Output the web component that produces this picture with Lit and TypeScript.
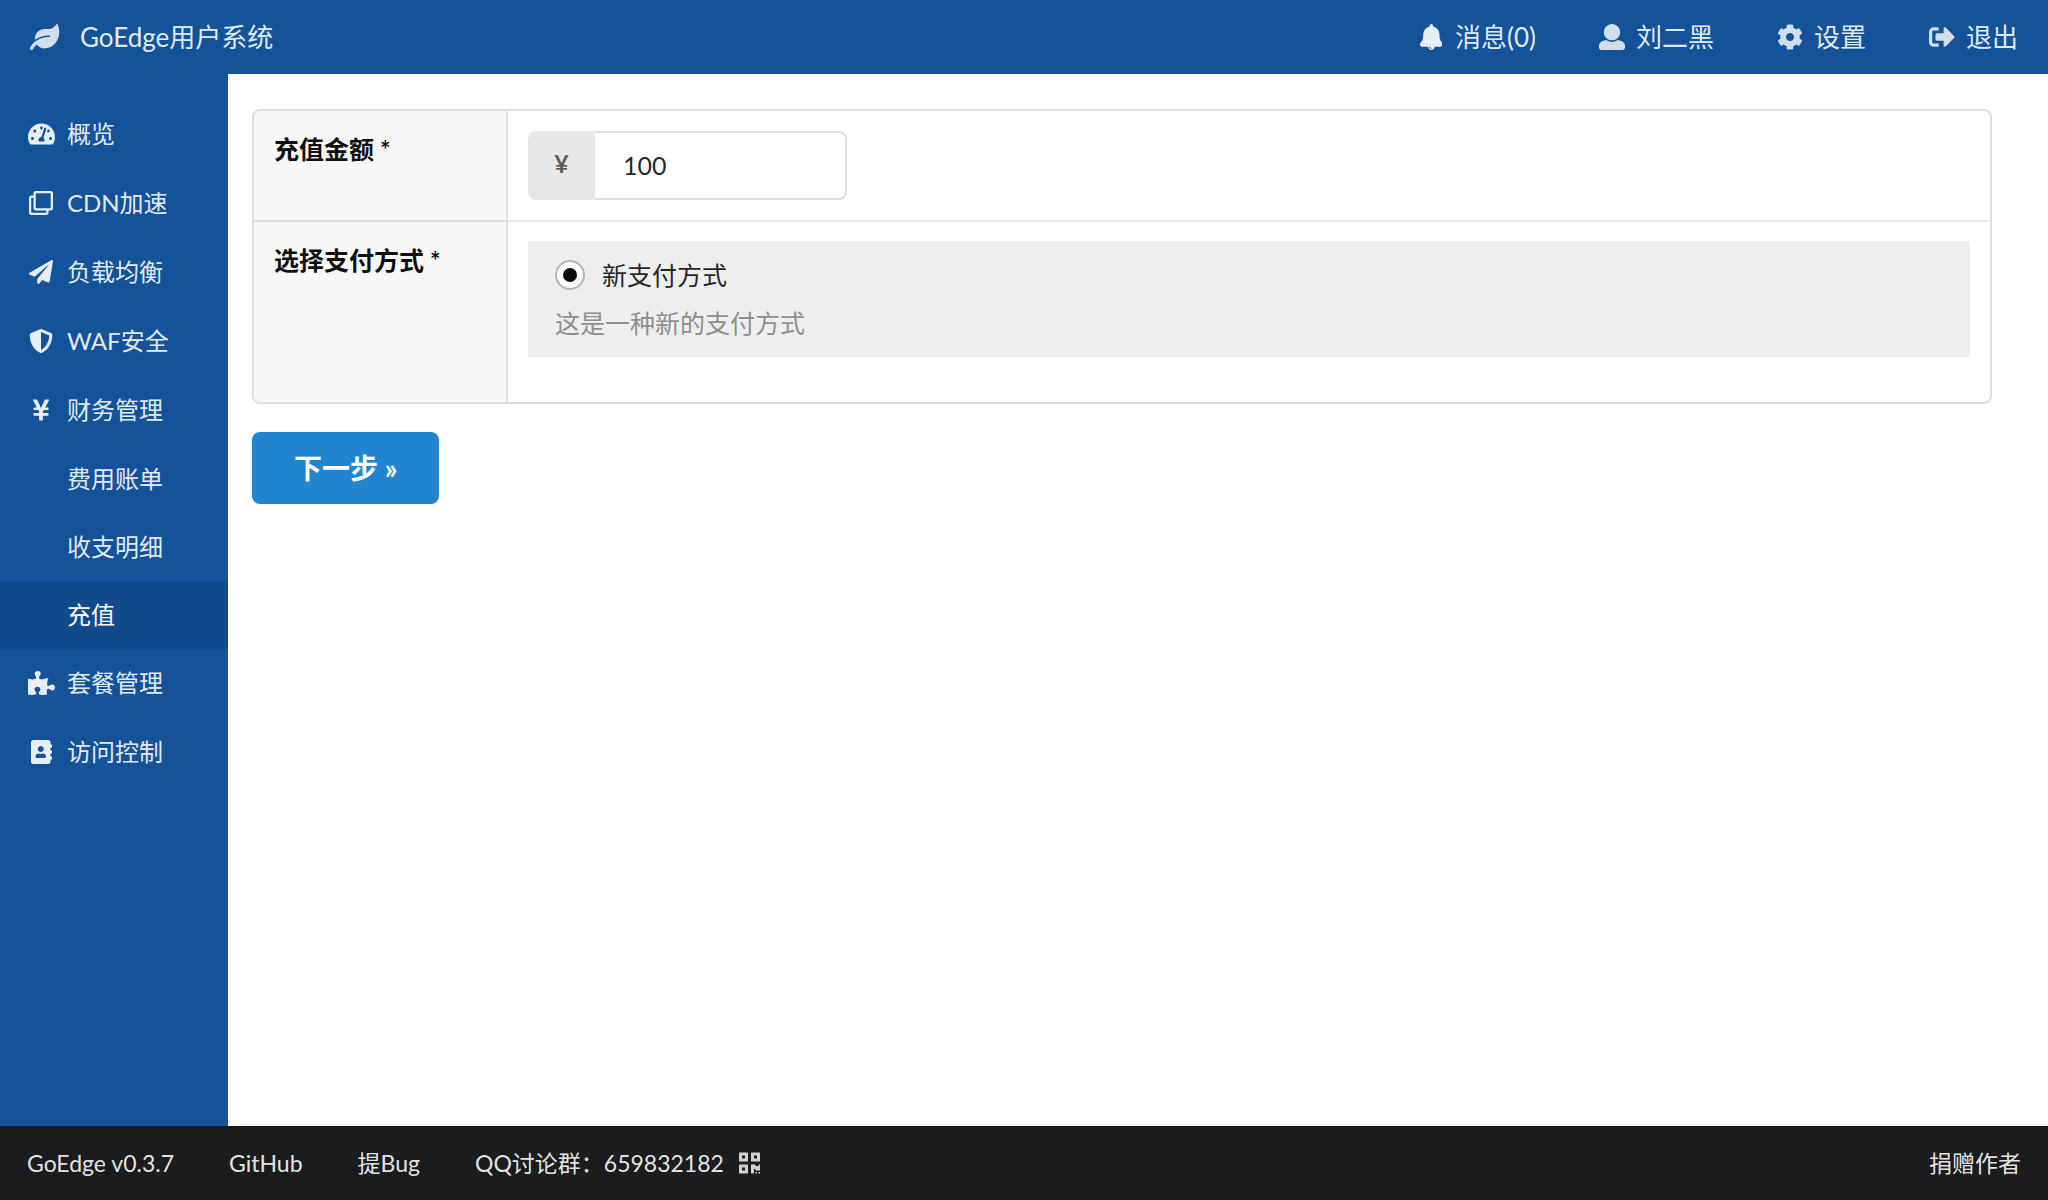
import { LitElement, html, css, svg } from "lit";
import { customElement, property, state } from "lit/decorators.js";
import { classMap } from "lit/directives/class-map.js";

interface Glyph {
  width: number;
  path: string;
}

const GLYPHS: Record<string, Glyph> = {
  leaf: {
    width: 576,
    path: "M546.2 9.7c-5.6-12.5-21.6-13-28.3-1.2C486.9 62.4 431.4 96 368 96h-80C182 96 96 182 96 288c0 7 .8 13.7 1.5 20.5C161.3 262.8 253.4 224 384 224c8.8 0 16 7.2 16 16s-7.2 16-16 16C132.6 256 26 410.1 2.4 468c-6.6 16.3 1.2 34.9 17.5 41.6 16.4 6.8 35-1.1 41.8-17.3 1.5-3.6 20.9-47.9 71.9-90.6 32.4 43.9 94 85.8 174.9 77.2C465.5 467.5 576 326.7 576 154.3c0-50.2-10.8-102.2-29.8-144.6z",
  },
  dashboard: {
    width: 576,
    path: "M288 32C128.94 32 0 160.94 0 320c0 52.8 14.25 102.26 39.06 144.8 5.61 9.62 16.3 15.2 27.44 15.2h443c11.14 0 21.83-5.58 27.44-15.2C561.75 422.26 576 372.8 576 320c0-159.06-128.94-288-288-288zm0 64c14.71 0 26.58 10.13 30.32 23.65-1.11 2.26-2.64 4.23-3.45 6.67l-9.22 27.67c-5.13 3.49-10.97 6.01-17.64 6.01-17.67 0-32-14.33-32-32S270.33 96 288 96zM96 384c-17.67 0-32-14.33-32-32s14.33-32 32-32 32 14.33 32 32-14.33 32-32 32zm48-160c-17.67 0-32-14.33-32-32s14.33-32 32-32 32 14.33 32 32-14.33 32-32 32zm246.77-72.41l-61.33 184C343.13 347.33 352 364.54 352 384c0 11.72-3.38 22.55-8.88 32H232.88c-5.5-9.45-8.88-20.28-8.88-32 0-33.94 26.5-61.43 59.9-63.59l61.34-184.01c4.17-12.56 17.73-19.45 30.36-15.17 12.57 4.19 19.35 17.79 15.17 30.36zm14.66 57.2l15.52-46.55c3.47-1.29 7.13-2.23 11.05-2.23 17.67 0 32 14.33 32 32s-14.33 32-32 32c-11.38-.01-20.89-6.28-26.57-15.22zM480 384c-17.67 0-32-14.33-32-32s14.33-32 32-32 32 14.33 32 32-14.33 32-32 32z",
  },
  clone: {
    width: 512,
    path: "M464 0H144c-26.51 0-48 21.49-48 48v48H48c-26.51 0-48 21.49-48 48v320c0 26.51 21.49 48 48 48h320c26.51 0 48-21.49 48-48v-48h48c26.51 0 48-21.49 48-48V48c0-26.51-21.49-48-48-48zM362 464H54a6 6 0 0 1-6-6V150a6 6 0 0 1 6-6h42v224c0 26.51 21.49 48 48 48h224v42a6 6 0 0 1-6 6zm96-96H150a6 6 0 0 1-6-6V54a6 6 0 0 1 6-6h308a6 6 0 0 1 6 6v308a6 6 0 0 1-6 6z",
  },
  plane: {
    width: 512,
    path: "M476 3.2L12.5 270.6c-18.1 10.4-15.8 35.6 2.2 43.2L121 358.4l287.3-253.2c5.5-4.9 13.3 2.6 8.6 8.3L176 407v80.5c0 23.6 28.5 32.9 42.5 15.8L282 426l124.6 52.2c14.2 6 30.4-2.9 33-18.2l72-432C515 7.8 493.3-6.8 476 3.2z",
  },
  shield: {
    width: 512,
    path: "M466.5 83.7l-192-80a48.15 48.15 0 0 0-36.9 0l-192 80C27.7 91.1 16 108.6 16 128c0 198.5 114.5 335.7 221.5 380.3 11.8 4.9 25.1 4.9 36.9 0C360.1 472.6 496 349.3 496 128c0-19.4-11.7-36.9-29.5-44.3zM256.1 446.3l-.1-381 175.9 73.3c-3.3 151.4-82.1 261.1-175.8 307.7z",
  },
  yen: {
    width: 384,
    path: "M351.2 32h-65.3c-4.6 0-8.8 2.6-10.8 6.7l-55.4 113.2c-14.5 34.7-27.1 71.9-27.1 71.9h-1.3s-12.6-37.2-27.1-71.9L108.8 38.7c-2-4.1-6.2-6.7-10.8-6.7H32.8c-9.1 0-14.8 9.7-10.6 17.6L102.3 200H44c-6.6 0-12 5.4-12 12v32c0 6.6 5.4 12 12 12h88.2l19.8 37.2V320H44c-6.6 0-12 5.4-12 12v32c0 6.6 5.4 12 12 12h108v92c0 6.6 5.4 12 12 12h56c6.6 0 12-5.4 12-12v-92h108c6.6 0 12-5.4 12-12v-32c0-6.6-5.4-12-12-12H232v-26.8l19.8-37.2H340c6.6 0 12-5.4 12-12v-32c0-6.6-5.4-12-12-12h-58.3l80.1-150.4c4.3-7.9-1.5-17.6-10.6-17.6z",
  },
  puzzle: {
    width: 576,
    path: "M519.442 288.651c-41.519 0-59.5 31.593-82.058 31.593C377.409 320.244 432 144 432 144s-196.288 80-196.288-3.297c0-35.827 36.288-46.25 36.288-85.985C272 19.216 243.885 0 210.539 0c-34.654 0-66.366 18.891-66.366 56.346 0 41.364 31.711 59.277 31.711 81.75C175.885 207.719 0 166.758 0 166.758v333.237s178.635 41.047 178.635-28.662c0-22.473-40-40.107-40-81.471 0-37.456 29.25-56.346 63.577-56.346 33.673 0 61.788 19.216 61.788 54.717 0 39.735-36.288 50.158-36.288 85.985 0 60.803 129.675 25.73 181.23 25.73 0 0-34.725-120.101 25.827-120.101 35.962 0 46.423 36.152 86.308 36.152C556.712 416 576 387.99 576 354.443c0-34.199-18.962-65.792-56.558-65.792z",
  },
  address: {
    width: 448,
    path: "M436 160c6.6 0 12-5.4 12-12v-40c0-6.6-5.4-12-12-12h-20V48c0-26.5-21.5-48-48-48H48C21.5 0 0 21.5 0 48v416c0 26.5 21.5 48 48 48h320c26.5 0 48-21.5 48-48v-48h20c6.6 0 12-5.4 12-12v-40c0-6.6-5.4-12-12-12h-20v-64h20c6.6 0 12-5.4 12-12v-40c0-6.6-5.4-12-12-12h-20v-64h20zm-228-32c35.3 0 64 28.7 64 64s-28.7 64-64 64-64-28.7-64-64 28.7-64 64-64zm112 236.8c0 10.6-10 19.2-22.4 19.2H118.4C106 384 96 375.4 96 364.8v-19.2c0-31.8 30.1-57.6 67.2-57.6h5c12.3 5.1 25.7 8 39.8 8s27.6-2.9 39.8-8h5c37.1 0 67.2 25.8 67.2 57.6v19.2z",
  },
  bell: {
    width: 448,
    path: "M433.884 366.059C411.634 343.809 384 316.118 384 208c0-79.394-57.831-145.269-133.663-157.83A31.845 31.845 0 0 0 256 32c0-17.673-14.327-32-32-32s-32 14.327-32 32c0 6.75 2.095 13.008 5.663 18.17C121.831 62.731 64 128.606 64 208c0 108.118-27.643 135.809-49.893 158.059C-16.042 396.208 5.325 448 48.048 448H160c0 35.346 28.654 64 64 64s64-28.654 64-64h111.943c42.638 0 64.151-51.731 33.941-81.941zM224 472a8 8 0 0 1 0 16c-22.056 0-40-17.944-40-40h16c0 13.234 10.766 24 24 24z",
  },
  user: {
    width: 512,
    path: "M256 0c88.366 0 160 71.634 160 160s-71.634 160-160 160S96 248.366 96 160 167.634 0 256 0zm183.283 333.821l-71.313-17.828c-74.923 53.89-165.738 41.864-223.94 0l-71.313 17.828C29.981 344.505 0 382.903 0 426.955V464c0 26.51 21.49 48 48 48h416c26.51 0 48-21.49 48-48v-37.045c0-44.052-29.981-82.45-72.717-93.134z",
  },
  cog: {
    width: 512,
    path: "M444.788 291.1l42.616 24.599c4.867 2.809 7.126 8.618 5.459 13.985-11.07 35.642-29.97 67.842-54.689 94.586a12.016 12.016 0 0 1-14.832 2.254l-42.584-24.595a191.577 191.577 0 0 1-60.759 35.13v49.182a12.01 12.01 0 0 1-9.377 11.718c-34.956 7.85-72.499 8.256-109.219.007-5.49-1.233-9.403-6.096-9.403-11.723v-49.184a191.555 191.555 0 0 1-60.759-35.13l-42.584 24.595a12.016 12.016 0 0 1-14.832-2.254c-24.718-26.744-43.619-58.944-54.689-94.586-1.667-5.366.592-11.175 5.459-13.985L67.212 291.1a193.48 193.48 0 0 1 0-70.199l-42.616-24.599c-4.867-2.809-7.126-8.618-5.459-13.985 11.07-35.642 29.97-67.842 54.689-94.586a12.016 12.016 0 0 1 14.832-2.254l42.584 24.595a191.577 191.577 0 0 1 60.759-35.13V25.759a12.01 12.01 0 0 1 9.377-11.718c34.956-7.85 72.499-8.256 109.219-.007 5.49 1.233 9.403 6.096 9.403 11.723v49.184a191.555 191.555 0 0 1 60.759 35.13l42.584-24.595a12.016 12.016 0 0 1 14.832 2.254c24.718 26.744 43.619 58.944 54.689 94.586 1.667 5.366-.592 11.175-5.459 13.985L444.788 220.9a193.485 193.485 0 0 1 0 70.2zM336 256c0-44.112-35.888-80-80-80s-80 35.888-80 80 35.888 80 80 80 80-35.888 80-80z",
  },
  exit: {
    width: 512,
    path: "M497 273L329 441c-15 15-41 4.5-41-17v-96H152c-13.3 0-24-10.7-24-24v-96c0-13.3 10.7-24 24-24h136V88c0-21.4 25.9-32 41-17l168 168c9.3 9.4 9.3 24.6 0 34zM192 436v-40c0-6.6-5.4-12-12-12H96c-17.7 0-32-14.3-32-32V160c0-17.7 14.3-32 32-32h84c6.6 0 12-5.4 12-12V76c0-6.6-5.4-12-12-12H96c-53 0-96 43-96 96v192c0 53 43 96 96 96h84c6.6 0 12-5.4 12-12z",
  },
  qrcode: {
    width: 448,
    path: "M0 224h192V32H0v192zM64 96h64v64H64V96zm192-64v192h192V32H256zm128 128h-64V96h64v64zM0 480h192V288H0v192zm64-128h64v64H64v-64zm352-64h32v128h-96v-32h-32v96h-64V288h96v32h64v-32zm0 160h32v32h-32v-32zm-64 0h32v32h-32v-32z",
  },
};

@customElement("glyph-icon")
export class GlyphIcon extends LitElement {
  static styles = css`
    :host {
      display: inline-flex;
      flex: none;
      justify-content: center;
      width: 28px;
    }
    .glyph {
      display: block;
      height: 1em;
      fill: currentColor;
    }
  `;

  @property() name = "leaf";

  render() {
    const glyph = GLYPHS[this.name];
    return html`<svg class="glyph" viewBox="0 0 ${glyph.width} 512" aria-hidden="true">
      ${svg`<path fill-rule="evenodd" d=${glyph.path}></path>`}
    </svg>`;
  }
}

const TOP_LINKS = [
  { icon: "bell", label: "消息(0)", bright: true },
  { icon: "user", label: "刘二黑", bright: false },
  { icon: "cog", label: "设置", bright: false },
  { icon: "exit", label: "退出", bright: false },
];

const MENU = [
  { icon: "dashboard", label: "概览" },
  { icon: "clone", label: "CDN加速" },
  { icon: "plane", label: "负载均衡" },
  { icon: "shield", label: "WAF安全" },
  { icon: "yen", label: "财务管理" },
  { label: "费用账单" },
  { label: "收支明细" },
  { label: "充值", active: true },
  { icon: "puzzle", label: "套餐管理" },
  { icon: "address", label: "访问控制" },
];

@customElement("app-root")
export class AppRoot extends LitElement {
  static styles = css`
    :host {
      display: flex;
      flex-direction: column;
      min-height: 100vh;
      background: #fff;
      color: rgba(0, 0, 0, 0.87);
      font-family: Lato, "Noto Sans CJK SC", sans-serif;
      font-size: 25px;
      line-height: 36px;
    }
    * {
      box-sizing: border-box;
    }
    a {
      color: inherit;
      text-decoration: none;
    }
    .topbar {
      display: flex;
      align-items: center;
      justify-content: space-between;
      height: 74px;
      padding: 0 30px;
      background: #14539a;
      color: rgba(255, 255, 255, 0.9);
      font-size: 26px;
    }
    .brand,
    .top-link {
      display: flex;
      align-items: center;
    }
    .brand {
      gap: 20px;
    }
    .brand-icon {
      width: 30px;
      color: rgba(255, 255, 255, 0.81);
    }
    .top-links {
      display: flex;
      gap: 62px;
    }
    .top-link {
      gap: 10px;
    }
    .top-icon {
      opacity: 0.9;
    }
    .top-icon.bright {
      opacity: 1;
    }
    .body {
      display: flex;
      flex: 1;
    }
    .sidebar {
      flex: none;
      width: 228px;
      padding-top: 26px;
      background: #14539a;
    }
    .menu {
      margin: 0;
      padding: 0;
      list-style: none;
    }
    .menu-link {
      display: flex;
      align-items: center;
      gap: 12px;
      height: 68px;
      margin-bottom: 1px;
      padding-left: 27px;
      color: rgba(255, 255, 255, 0.9);
      font-size: 24px;
    }
    .menu-link.sub {
      margin-bottom: 0;
      padding-left: 67px;
    }
    .menu-link.active {
      background: #114b8b;
      color: #fff;
    }
    .main {
      flex: 1;
      min-width: 0;
      padding: 35px 56px 28px 24px;
    }
    .form-table {
      width: 100%;
      border: 2px solid #dededf;
      border-radius: 8px;
      border-spacing: 0;
      border-collapse: separate;
      overflow: hidden;
    }
    .row + .row > .title,
    .row + .row > .field {
      border-top: 2px solid #e8e8e9;
    }
    .title {
      width: 254px;
      padding: 20px;
      background: #f7f7f7;
      border-right: 2px solid #dededf;
      color: rgba(0, 0, 0, 0.95);
      font-weight: 700;
      text-align: left;
      vertical-align: top;
    }
    .row + .row > .title {
      border-top-color: #dededf;
    }
    .field {
      padding: 20px;
      vertical-align: top;
    }
    .row + .row > .field {
      padding-top: 19px;
    }
    .amount {
      display: flex;
      width: 319px;
      height: 69px;
    }
    .unit {
      display: flex;
      flex: none;
      align-items: center;
      justify-content: center;
      width: 67px;
      padding-bottom: 6px;
      background: #e8e8e8;
      border-radius: 8px 0 0 8px;
      color: rgba(0, 0, 0, 0.6);
      font-weight: 700;
    }
    .amount-input {
      flex: 1;
      min-width: 0;
      padding: 0 28px 2px;
      background: #fff;
      border: 2px solid #dededf;
      border-left: 0;
      border-radius: 0 8px 8px 0;
      color: rgba(0, 0, 0, 0.87);
      font: inherit;
      outline: none;
    }
    .methods {
      margin: 0 0 25px;
      padding: 0;
      border: 0;
      min-width: 0;
    }
    .method {
      padding: 16px 27px;
      background: #eee;
    }
    .method-choice {
      display: flex;
      align-items: center;
      gap: 17px;
    }
    .radio {
      display: grid;
      flex: none;
      place-content: center;
      width: 30px;
      height: 30px;
      margin: 0;
      appearance: none;
      background: #fff;
      border: 2px solid #b5b5b5;
      border-radius: 50%;
    }
    .radio:checked::before {
      content: "";
      width: 14px;
      height: 14px;
      background: rgba(0, 0, 0, 0.95);
      border-radius: 50%;
    }
    .method-note {
      margin: 12px 0 0;
      color: #8f8f8f;
    }
    .next {
      height: 72px;
      margin-top: 28px;
      padding: 0 41px 0 42px;
      background: #2185d0;
      border: 0;
      border-radius: 8px;
      color: #fff;
      font: inherit;
      font-size: 28px;
      font-weight: 700;
    }
    .footer {
      display: flex;
      align-items: center;
      gap: 55px;
      height: 74px;
      padding: 0 27px;
      background: #1b1c1d;
      color: rgba(255, 255, 255, 0.9);
      font-size: 23px;
    }
    .group {
      display: flex;
      align-items: center;
      gap: 12px;
    }
    .group-icon {
      color: rgba(255, 255, 255, 0.8);
      font-size: 24px;
    }
    .donate {
      margin-left: auto;
    }
  `;

  @state() private amount = "100";

  private onAmount(event: Event) {
    this.amount = (event.target as HTMLInputElement).value;
  }

  private renderMenuItem(item: (typeof MENU)[number]) {
    const classes = { "menu-link": true, sub: !item.icon, active: Boolean(item.active) };
    return html`<li>
      <a class=${classMap(classes)} href="#">
        ${item.icon ? html`<glyph-icon name=${item.icon}></glyph-icon>` : ""}<span>${item.label}</span>
      </a>
    </li>`;
  }

  render() {
    return html`
      <header class="topbar">
        <a class="brand" href="#">
          <glyph-icon class="brand-icon" name="leaf"></glyph-icon><span>GoEdge用户系统</span>
        </a>
        <nav class="top-links">
          ${TOP_LINKS.map(
            (link) => html`<a class="top-link" href="#">
              <glyph-icon class=${classMap({ "top-icon": true, bright: link.bright })} name=${link.icon}></glyph-icon>
              <span>${link.label}</span>
            </a>`
          )}
        </nav>
      </header>
      <div class="body">
        <nav class="sidebar">
          <ul class="menu">
            ${MENU.map((item) => this.renderMenuItem(item))}
          </ul>
        </nav>
        <main class="main">
          <form @submit=${(event: Event) => event.preventDefault()}>
            <table class="form-table">
              <tbody>
                <tr class="row">
                  <th class="title" scope="row"><label for="amount">充值金额 *</label></th>
                  <td class="field">
                    <div class="amount">
                      <label class="unit" for="amount">¥</label>
                      <input id="amount" class="amount-input" type="text" .value=${this.amount} @input=${this.onAmount} />
                    </div>
                  </td>
                </tr>
                <tr class="row">
                  <th class="title" id="method-title" scope="row">选择支付方式 *</th>
                  <td class="field">
                    <fieldset class="methods" aria-labelledby="method-title">
                      <div class="method">
                        <div class="method-choice">
                          <input id="method" class="radio" type="radio" name="method" checked />
                          <label for="method">新支付方式</label>
                        </div>
                        <p class="method-note">这是一种新的支付方式</p>
                      </div>
                    </fieldset>
                  </td>
                </tr>
              </tbody>
            </table>
            <button class="next" type="submit">下一步 »</button>
          </form>
        </main>
      </div>
      <footer class="footer">
        <a href="#">GoEdge v0.3.7</a>
        <a href="#">GitHub</a>
        <a href="#">提Bug</a>
        <a class="group" href="#"><span>QQ讨论群：659832182</span><glyph-icon class="group-icon" name="qrcode"></glyph-icon></a>
        <a class="donate" href="#">捐赠作者</a>
      </footer>
    `;
  }
}
